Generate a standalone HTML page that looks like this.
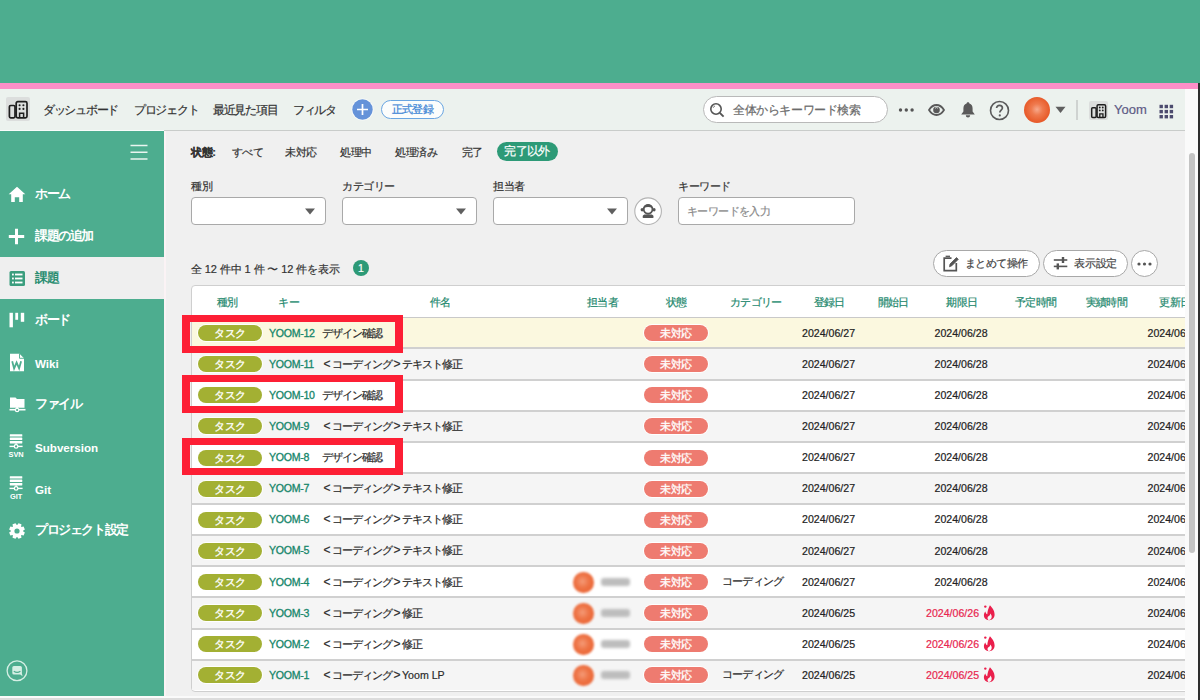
<!DOCTYPE html>
<html lang="ja">
<head>
<meta charset="utf-8">
<style>
*{box-sizing:border-box;margin:0;padding:0}
html,body{width:1200px;height:700px;overflow:hidden}
body{position:relative;background:#f0f0f0;font-family:"Liberation Sans",sans-serif;color:#333;font-size:11px;-webkit-text-stroke:0.2px currentColor}
.abs{position:absolute}
#band{left:0;top:0;width:1200px;height:83px;background:#4dad8f}
#pink{left:0;top:83px;width:1198px;height:6px;background:#fd8fc8}
#dark{left:1198px;top:83px;width:2px;height:617px;background:#2e2e2e}
#track{left:1185px;top:89px;width:13px;height:611px;background:#fafafa}
#thumb{left:1188.5px;top:153px;width:6.5px;height:400px;border-radius:4px;background:#c3c3c3}
#header{left:0;top:89px;width:1185px;height:42px;background:#ecf2ee;border-bottom:1px solid #c9ccca}
#side{left:0;top:131px;width:164px;height:565px;background:#4dad8f}
#sideline{left:164px;top:131px;width:1.5px;height:565px;background:#fbf3f5}
#bottom{left:0;top:696px;width:1185px;height:4px;background:#fafafa;border-top:0}
#bottomline{left:0;top:698px;width:1185px;height:2px;background:#dcdcdc}
.nav{top:102px;font-size:12px;color:#333;letter-spacing:-1.3px;white-space:nowrap}
.side-item{left:0;width:164px;height:42px}
.side-item .t{position:absolute;left:35px;top:13px;font-size:12.5px;font-weight:bold;color:#fff;letter-spacing:-1.4px;white-space:nowrap;-webkit-text-stroke:0}
.side-item.sel{background:#efefef}
.side-item.sel .t{color:#2b8e72}
.side-item svg{position:absolute;left:8px;top:13px}

.jp{white-space:nowrap}
.st{top:145px;font-size:11px;color:#333;letter-spacing:-0.4px;white-space:nowrap}
.lbl{top:179px;font-size:11px;color:#333;letter-spacing:-0.4px;white-space:nowrap}
.selbox{top:197px;height:28px;width:135px;background:#fff;border:1.5px solid #a9a9a9;border-radius:4px}
.selbox svg{position:absolute;right:10px;top:10px}
.btn{top:250px;height:27px;background:#fff;border:1px solid #a8a8a8;border-radius:14px}
#table{left:191px;top:285px;width:1100px;height:407px;background:#fff;border:1px solid #cfcfcf;border-radius:4px;overflow:hidden}
.hd{top:295.5px;font-size:10.6px;color:#24896e;letter-spacing:-0.7px;white-space:nowrap;-webkit-text-stroke:0.2px #24896e}
.row{left:192px;width:993px;height:31px;border-bottom:2px solid #d0d0d0}
.pill{position:absolute;left:198px;width:64px;height:16px;border-radius:8px;background:#a3b033;color:#fff;font-size:11px;text-align:center;line-height:16px;letter-spacing:-0.2px;box-shadow:0 0 0 1px #fff;-webkit-text-stroke:0.3px #fff}
.stp{position:absolute;left:643.5px;width:64.5px;height:16px;border-radius:8px;background:#ee7b70;color:#fff;font-size:11px;text-align:center;line-height:16px;letter-spacing:-0.6px;box-shadow:0 0 0 1px #fff;-webkit-text-stroke:0.3px #fff}
.key{position:absolute;left:269px;font-size:10.6px;color:#15866a;letter-spacing:-0.3px;white-space:nowrap;-webkit-text-stroke:0.3px #15866a}
.ttl{position:absolute;left:322px;font-size:11px;color:#2a2a2a;letter-spacing:-1px;white-space:nowrap}
.br{display:inline-block;width:10px;text-align:center;letter-spacing:0;font-size:12px}
.dt{position:absolute;font-size:10.6px;color:#222;white-space:nowrap}
.red{color:#e8264f}
.cat{position:absolute;left:722px;font-size:10.5px;color:#2a2a2a;letter-spacing:-0.8px;white-space:nowrap}
.rbox{position:absolute;left:182px;width:221px;border:7.6px solid #fd1f35;border-left-width:8.2px;border-right-width:8.2px}
</style>
</head>
<body>
<div id="band" class="abs"></div>
<div id="pink" class="abs"></div>
<div id="header" class="abs"></div>
<div id="side" class="abs"></div>
<div class="abs" style="left:0;top:129.5px;width:164px;height:1.5px;background:#fafcfb"></div>
<div id="sideline" class="abs"></div>
<div id="bottom" class="abs"></div>
<div id="bottomline" class="abs"></div>


<!-- header content -->
<div class="abs" style="left:6px;top:97px;width:24px;height:24px;background:#dcdedd;border-radius:2px"></div>
<svg class="abs" style="left:6px;top:97px" width="24" height="24" viewBox="0 0 24 24" fill="none" stroke="#1e1e1e" stroke-width="1.7">
<rect x="10.2" y="4.6" width="10.8" height="16.2" rx="1.6"/>
<rect x="3.4" y="8.5" width="5.6" height="12.3" rx="1.3"/>
<path d="M13.6 20.8V16.3H17.6V20.8" stroke-width="1.5"/>
<g fill="#1e1e1e" stroke="none"><circle cx="13.6" cy="8.2" r="1.05"/><circle cx="17.4" cy="8.2" r="1.05"/><circle cx="13.6" cy="11.9" r="1.05"/><circle cx="17.4" cy="11.9" r="1.05"/></g>
</svg>
<div class="abs nav" style="left:43px">ダッシュボード</div>
<div class="abs nav" style="left:134px">プロジェクト</div>
<div class="abs nav" style="left:213px">最近見た項目</div>
<div class="abs nav" style="left:293px">フィルタ</div>
<svg class="abs" style="left:351px;top:98px" width="23" height="23" viewBox="0 0 23 23"><circle cx="11.5" cy="11.5" r="11" fill="#fafcf9"/><circle cx="11.5" cy="11.5" r="10.2" fill="#6593d9"/><path d="M11.5 6V17M6 11.5H17" stroke="#fff" stroke-width="1.7"/></svg>
<div class="abs" style="left:381px;top:100px;width:63px;height:19px;border-radius:10px;border:1.5px solid #6aa6e2;background:#fbfdfc;color:#3f87d6;font-size:11px;text-align:center;line-height:16px;letter-spacing:-0.8px;-webkit-text-stroke:0.25px #3f87d6">正式登録</div>

<div class="abs" style="left:703px;top:96px;width:185px;height:27px;border-radius:14px;border:1px solid #b9b9b9;background:#fff"></div>
<svg class="abs" style="left:709px;top:102px" width="16" height="16" viewBox="0 0 16 16" fill="none" stroke="#555" stroke-width="1.6"><circle cx="7" cy="7" r="5.2"/><path d="M10.8 10.8L14.6 14.6" stroke-width="1.9"/><path d="M4.3 5.6A3 3 0 0 1 5.8 4" stroke-width="1"/></svg>
<div class="abs" style="left:733px;top:102px;font-size:12px;color:#6b6b6b;letter-spacing:-0.4px;white-space:nowrap">全体からキーワード検索</div>

<svg class="abs" style="left:898px;top:107px" width="17" height="6" viewBox="0 0 17 6" fill="#555"><circle cx="2.5" cy="3" r="1.7"/><circle cx="8.3" cy="3" r="1.7"/><circle cx="14.1" cy="3" r="1.7"/></svg>
<svg class="abs" style="left:928px;top:104px" width="17" height="12" viewBox="0 0 17 12"><path d="M1 6C3.2 2.4 5.8 1 8.5 1S13.8 2.4 16 6C13.8 9.6 11.2 11 8.5 11S3.2 9.6 1 6Z" fill="none" stroke="#595959" stroke-width="1.8"/><circle cx="8.5" cy="6" r="3.3" fill="#595959"/><path d="M7 4.3A2 2 0 0 1 10 4.3" stroke="#ecf2ee" stroke-width="0.8" fill="none"/></svg>
<svg class="abs" style="left:959px;top:101px" width="18" height="17" viewBox="0 0 18 17" fill="#5a5a5a"><path d="M9 1.3C9.8 1.3 10.3 1.8 10.4 2.5C12.6 3.1 13.6 5 13.6 7.5V10.5L15.8 13.4H2.2L4.4 10.5V7.5C4.4 5 5.4 3.1 7.6 2.5C7.7 1.8 8.2 1.3 9 1.3Z"/><path d="M6.8 14.3H11.2A2.2 2.2 0 0 1 6.8 14.3Z"/></svg>
<svg class="abs" style="left:989px;top:100px" width="21" height="21" viewBox="0 0 21 21"><circle cx="10.5" cy="10.5" r="9" fill="none" stroke="#5a5a5a" stroke-width="1.6"/><path d="M7.6 8.1C7.6 6.3 8.9 5.3 10.5 5.3S13.4 6.3 13.4 8C13.4 10 10.8 10.2 10.8 12.4" fill="none" stroke="#5a5a5a" stroke-width="1.7"/><circle cx="10.8" cy="15.4" r="1.1" fill="#5a5a5a"/></svg>
<div class="abs" style="left:1024px;top:97px;width:26px;height:26px;border-radius:50%;background:radial-gradient(circle at 50% 48%,#f7a98c 0,#ef7a4e 30%,#e85d2c 65%,#e4552a 100%)"></div>
<svg class="abs" style="left:1055px;top:106px" width="11" height="8" viewBox="0 0 11 8"><path d="M0.5 0.8H10.5L5.5 7Z" fill="#5f5f5f"/></svg>
<div class="abs" style="left:1076px;top:100px;width:1.5px;height:20px;background:#cfd3d1"></div>
<div class="abs" style="left:1089px;top:101px;width:19px;height:19px;background:#dcdedd;border-radius:2px"></div>
<svg class="abs" style="left:1089px;top:101px" width="19" height="19" viewBox="0 0 24 24" fill="none" stroke="#1e1e1e" stroke-width="1.9">
<rect x="10.2" y="4.6" width="10.8" height="16.2" rx="1.6"/>
<rect x="3.4" y="8.5" width="5.6" height="12.3" rx="1.3"/>
<path d="M13.6 20.8V16.3H17.6V20.8" stroke-width="1.7"/>
<g fill="#1e1e1e" stroke="none"><circle cx="13.6" cy="8.2" r="1.15"/><circle cx="17.4" cy="8.2" r="1.15"/><circle cx="13.6" cy="11.9" r="1.15"/><circle cx="17.4" cy="11.9" r="1.15"/></g>
</svg>
<div class="abs" style="left:1114px;top:102px;font-size:13px;color:#5d5b85;white-space:nowrap">Yoom</div>
<svg class="abs" style="left:1159px;top:104px" width="15" height="15" viewBox="0 0 15 15" fill="#4c4b6e"><rect x="0.5" y="0.8" width="3.4" height="3.4"/><rect x="5.6" y="0.8" width="3.4" height="3.4"/><rect x="10.7" y="0.8" width="3.4" height="3.4"/><rect x="0.5" y="5.9" width="3.4" height="3.4"/><rect x="5.6" y="5.9" width="3.4" height="3.4"/><rect x="10.7" y="5.9" width="3.4" height="3.4"/><rect x="0.5" y="11" width="3.4" height="3.4"/><rect x="5.6" y="11" width="3.4" height="3.4"/><rect x="10.7" y="11" width="3.4" height="3.4"/></svg>

<!-- sidebar -->
<svg class="abs" style="left:130px;top:144px" width="18" height="17" viewBox="0 0 18 17" stroke="#e9f5f0" stroke-width="1.5"><path d="M0.5 1.5H17.5M0.5 8.3H17.5M0.5 15H17.5"/></svg>
<div class="abs side-item" style="top:173px"><div class="t">ホーム</div></div>
<svg class="abs" style="left:8px;top:186px" width="18" height="17" viewBox="0 0 18 17" fill="#fff"><path d="M9 0.8L17.3 8.3H14.8V16H11.2V11.2H6.8V16H3.2V8.3H0.7Z"/></svg>
<div class="abs side-item" style="top:215px"><div class="t">課題の追加</div></div>
<svg class="abs" style="left:8px;top:228px" width="17" height="17" viewBox="0 0 17 17" fill="#fff"><path d="M7 0.8H10V7H16.2V10H10V16.2H7V10H0.8V7H7Z"/></svg>
<div class="abs side-item sel" style="top:257px"><div class="t">課題</div></div>
<svg class="abs" style="left:9px;top:270px" width="17" height="17" viewBox="0 0 17 17"><rect x="0.5" y="1" width="15.5" height="15" rx="1.5" fill="#3b9e7e"/><g fill="#fff"><rect x="3" y="3.6" width="1.8" height="1.8"/><rect x="6" y="3.6" width="7.5" height="1.8"/><rect x="3" y="7.6" width="1.8" height="1.8"/><rect x="6" y="7.6" width="7.5" height="1.8"/><rect x="3" y="11.6" width="1.8" height="1.8"/><rect x="6" y="11.6" width="7.5" height="1.8"/></g></svg>
<div class="abs side-item" style="top:299px"><div class="t">ボード</div></div>
<svg class="abs" style="left:8px;top:312px" width="18" height="17" viewBox="0 0 18 17" fill="#fff"><rect x="1.5" y="0.8" width="3.4" height="14.5"/><rect x="7.3" y="0.8" width="2.8" height="7"/><rect x="12.8" y="0.8" width="3.4" height="9"/></svg>
<div class="abs side-item" style="top:341px"><div class="t" style="font-size:11.6px;letter-spacing:0;top:15.6px">Wiki</div></div>
<svg class="abs" style="left:9px;top:353px" width="16" height="19" viewBox="0 0 16 19"><path d="M1 0.8H10.5L15 5.3V18.2H1Z" fill="#fff"/><path d="M10.5 0.8V5.3H15" fill="none" stroke="#4dad8f" stroke-width="0.9"/><path d="M3.2 8.2L5.1 15.4L7.6 9.6L10.1 15.4L12.1 8.2" fill="none" stroke="#4dad8f" stroke-width="1.8"/></svg>
<div class="abs side-item" style="top:383px"><div class="t">ファイル</div></div>
<svg class="abs" style="left:9px;top:396px" width="17" height="18" viewBox="0 0 17 18" fill="#fff"><path d="M1 1.5H6.5L8 3H15.5V11.8H1Z"/><rect x="7.3" y="11" width="1.6" height="2.5"/><path d="M0.5 13.7H16.5" stroke="#fff" stroke-width="1.6"/><circle cx="8.1" cy="14" r="2.3" fill="#fff"/><circle cx="8.1" cy="14" r="1.1" fill="#4dad8f"/></svg>
<div class="abs side-item" style="top:425px"><div class="t" style="font-size:11.6px;letter-spacing:0;top:15.6px">Subversion</div></div>
<svg class="abs" style="left:8px;top:433px" width="17" height="25" viewBox="0 0 17 25"><g fill="#fff"><rect x="1.8" y="1.2" width="12.5" height="2.4" rx="0.4"/><rect x="1.8" y="4.6" width="12.5" height="2.4" rx="0.4"/><rect x="1.8" y="8" width="12.5" height="2.4" rx="0.4"/><rect x="7.3" y="10.4" width="1.6" height="2"/></g><path d="M1.5 13.4H14.6" stroke="#fff" stroke-width="1.4"/><circle cx="8.1" cy="13.4" r="1.8" fill="#4dad8f" stroke="#fff" stroke-width="1.3"/><text x="8.1" y="23.6" text-anchor="middle" font-family="Liberation Sans" font-weight="bold" font-size="7.4" fill="#fff">SVN</text></svg>
<div class="abs side-item" style="top:467px"><div class="t" style="font-size:11.6px;letter-spacing:0;top:15.6px">Git</div></div>
<svg class="abs" style="left:8px;top:475px" width="17" height="25" viewBox="0 0 17 25"><g fill="#fff"><rect x="1.8" y="1.2" width="12.5" height="2.4" rx="0.4"/><rect x="1.8" y="4.6" width="12.5" height="2.4" rx="0.4"/><rect x="1.8" y="8" width="12.5" height="2.4" rx="0.4"/><rect x="7.3" y="10.4" width="1.6" height="2"/></g><path d="M1.5 13.4H14.6" stroke="#fff" stroke-width="1.4"/><circle cx="8.1" cy="13.4" r="1.8" fill="#4dad8f" stroke="#fff" stroke-width="1.3"/><text x="8.1" y="23.6" text-anchor="middle" font-family="Liberation Sans" font-weight="bold" font-size="7.4" fill="#fff">GIT</text></svg>
<div class="abs side-item" style="top:509px"><div class="t">プロジェクト設定</div></div>
<svg class="abs" style="left:8px;top:521.6px" width="18" height="18" viewBox="0 0 18 18"><path fill="#fff" fill-rule="evenodd" d="M9.20 3.00L10.53 1.15L13.47 2.36L13.10 4.62L13.38 4.90L15.64 4.53L16.85 7.47L15.00 8.80L15.00 9.20L16.85 10.53L15.64 13.47L13.38 13.10L13.10 13.38L13.47 15.64L10.53 16.85L9.20 15.00L8.80 15.00L7.47 16.85L4.53 15.64L4.90 13.38L4.62 13.10L2.36 13.47L1.15 10.53L3.00 9.20L3.00 8.80L1.15 7.47L2.36 4.53L4.62 4.90L4.90 4.62L4.53 2.36L7.47 1.15L8.80 3.00Z M9 6.4A2.6 2.6 0 1 0 9 11.6A2.6 2.6 0 1 0 9 6.4Z"/></svg>
<svg class="abs" style="left:6px;top:659px" width="23" height="23" viewBox="0 0 23 23"><circle cx="11" cy="11.8" r="9.9" fill="none" stroke="#d6efe5" stroke-width="1.3"/><path d="M6.3 8.6Q6.3 7 7.9 7H14.3Q15.9 7 15.9 8.6V14.6L16.6 17.2L14.2 15.6H7.9Q6.3 15.6 6.3 14Z" fill="#d6efe5"/><path d="M7.8 12.2Q11.1 14.6 14.4 12.2" fill="none" stroke="#4dad8f" stroke-width="1.1"/></svg>

<!-- content -->
<div class="abs st" style="left:191px;font-weight:bold;-webkit-text-stroke:0.2px #333">状態:</div>
<div class="abs st" style="left:231.5px">すべて</div>
<div class="abs st" style="left:285px">未対応</div>
<div class="abs st" style="left:340px">処理中</div>
<div class="abs st" style="left:395px">処理済み</div>
<div class="abs st" style="left:461.5px">完了</div>
<div class="abs" style="left:496.5px;top:142px;width:61px;height:19px;border-radius:10px;background:#2d9a77;color:#fff;font-size:11.5px;line-height:19px;text-align:center;letter-spacing:-0.6px;-webkit-text-stroke:0.2px #fff">完了以外</div>

<div class="abs lbl" style="left:191px">種別</div>
<div class="abs lbl" style="left:342px">カテゴリー</div>
<div class="abs lbl" style="left:493px">担当者</div>
<div class="abs lbl" style="left:678px">キーワード</div>
<div class="abs selbox" style="left:191px"><svg width="10" height="7" viewBox="0 0 10 7"><path d="M0 0.5H10L5 6.5Z" fill="#5f5f5f"/></svg></div>
<div class="abs selbox" style="left:342px"><svg width="10" height="7" viewBox="0 0 10 7"><path d="M0 0.5H10L5 6.5Z" fill="#5f5f5f"/></svg></div>
<div class="abs selbox" style="left:493px"><svg width="10" height="7" viewBox="0 0 10 7"><path d="M0 0.5H10L5 6.5Z" fill="#5f5f5f"/></svg></div>
<svg class="abs" style="left:634px;top:197px" width="28" height="28" viewBox="0 0 28 28"><circle cx="14.1" cy="14.2" r="13.3" fill="#fff" stroke="#b3b3b3" stroke-width="1.1"/><g fill="#555"><ellipse cx="8.1" cy="12.7" rx="1.5" ry="1.7"/><ellipse cx="20.1" cy="12.7" rx="1.5" ry="1.7"/><path d="M8.6 20.2Q8.4 18.2 10.3 17.6H17.9Q19.8 18.2 19.6 20.2Q19.5 21 18.6 21H9.6Q8.7 21 8.6 20.2Z"/></g><circle cx="14.1" cy="12.3" r="4.4" fill="#fff" stroke="#555" stroke-width="1.9"/><path d="M9.8 11.3Q10.6 7.2 14.1 7.2Q17.6 7.2 18.4 11.3Q14.1 8.7 9.8 11.3Z" fill="#555"/></svg>
<div class="abs" style="left:678px;top:197px;width:177px;height:28px;background:#fff;border:1.5px solid #a9a9a9;border-radius:4px"></div>
<div class="abs" style="left:687px;top:204px;font-size:11px;color:#8a8a8a;letter-spacing:-0.6px;white-space:nowrap">キーワードを入力</div>

<div class="abs" style="left:191px;top:262px;font-size:11px;color:#333;letter-spacing:-0.1px;white-space:nowrap">全 12 件中 1 件 〜 12 件を表示</div>
<div class="abs" style="left:353px;top:260px;width:16px;height:16px;border-radius:50%;background:#2d9a77;color:#fff;font-size:10.5px;line-height:16px;text-align:center">1</div>

<div class="abs btn" style="left:933px;width:107px"></div>
<svg class="abs" style="left:942px;top:255px" width="17" height="17" viewBox="0 0 17 17" fill="none" stroke="#555" stroke-width="1.7"><path d="M9.5 3.2H2.2V15.6H14.3V8"/><path d="M7.5 11.8L8 9L14.5 2.5L16.3 4.3L9.8 10.8Z" fill="#555" stroke-width="0.8"/><path d="M3.6 1.3H8" stroke-width="1.3"/></svg>
<div class="abs" style="left:965px;top:256px;font-size:11px;color:#444;letter-spacing:-0.6px;white-space:nowrap">まとめて操作</div>
<div class="abs btn" style="left:1043px;width:84.5px"></div>
<svg class="abs" style="left:1053px;top:256px" width="15" height="15" viewBox="0 0 15 15" fill="#555"><rect x="0.8" y="3.2" width="13.5" height="1.6"/><rect x="0.8" y="9.6" width="13.5" height="1.6"/><rect x="8.8" y="1" width="2.4" height="6"/><rect x="3.6" y="7.4" width="2.4" height="6"/></svg>
<div class="abs" style="left:1074px;top:256px;font-size:11px;color:#444;letter-spacing:-0.2px;white-space:nowrap">表示設定</div>
<div class="abs btn" style="left:1131px;width:27px"></div>
<svg class="abs" style="left:1136px;top:261px" width="17" height="6" viewBox="0 0 17 6" fill="#555"><circle cx="3" cy="3" r="1.6"/><circle cx="8.5" cy="3" r="1.6"/><circle cx="14" cy="3" r="1.6"/></svg>

<div id="table" class="abs"></div>

<!-- table -->
<div class="abs hd" style="left:217px">種別</div>
<div class="abs hd" style="left:278.3px">キー</div>
<div class="abs hd" style="left:430px">件名</div>
<div class="abs hd" style="left:587px">担当者</div>
<div class="abs hd" style="left:665.8px">状態</div>
<div class="abs hd" style="left:730px">カテゴリー</div>
<div class="abs hd" style="left:813.8px">登録日</div>
<div class="abs hd" style="left:877.6px">開始日</div>
<div class="abs hd" style="left:946.4px">期限日</div>
<div class="abs hd" style="left:1015px">予定時間</div>
<div class="abs hd" style="left:1085.8px">実績時間</div>
<div class="abs hd" style="left:1159.4px">更新日</div>
<div class="abs" style="left:192px;top:316.5px;width:993px;height:2px;background:#c9c9c9"></div>
<div class="abs row" style="top:318.30px;height:31.13px;background:#fbf8df"></div>
<div class="pill" style="top:325.00px">タスク</div>
<div class="key" style="top:326.50px">YOOM-12</div>
<div class="ttl" style="top:325.50px">デザイン確認</div>
<div class="stp" style="top:325.00px">未対応</div>
<div class="dt" style="left:802px;top:326.70px">2024/06/27</div>
<div class="dt" style="left:934.5px;top:326.70px">2024/06/28</div>
<div class="dt" style="left:1147.5px;top:326.70px">2024/06/27</div>
<div class="abs row" style="top:349.43px;height:31.13px;background:#f5f5f5"></div>
<div class="pill" style="top:356.13px">タスク</div>
<div class="key" style="top:357.63px">YOOM-11</div>
<div class="ttl" style="top:356.63px"><span class="br">&lt;</span>コーディング<span class="br">&gt;</span>テキスト修正</div>
<div class="stp" style="top:356.13px">未対応</div>
<div class="dt" style="left:802px;top:357.83px">2024/06/27</div>
<div class="dt" style="left:934.5px;top:357.83px">2024/06/28</div>
<div class="dt" style="left:1147.5px;top:357.83px">2024/06/27</div>
<div class="abs row" style="top:380.56px;height:31.13px;background:#fff"></div>
<div class="pill" style="top:387.26px">タスク</div>
<div class="key" style="top:388.76px">YOOM-10</div>
<div class="ttl" style="top:387.76px">デザイン確認</div>
<div class="stp" style="top:387.26px">未対応</div>
<div class="dt" style="left:802px;top:388.96px">2024/06/27</div>
<div class="dt" style="left:934.5px;top:388.96px">2024/06/28</div>
<div class="dt" style="left:1147.5px;top:388.96px">2024/06/27</div>
<div class="abs row" style="top:411.69px;height:31.13px;background:#f5f5f5"></div>
<div class="pill" style="top:418.39px">タスク</div>
<div class="key" style="top:419.89px">YOOM-9</div>
<div class="ttl" style="top:418.89px"><span class="br">&lt;</span>コーディング<span class="br">&gt;</span>テキスト修正</div>
<div class="stp" style="top:418.39px">未対応</div>
<div class="dt" style="left:802px;top:420.09px">2024/06/27</div>
<div class="dt" style="left:934.5px;top:420.09px">2024/06/28</div>
<div class="dt" style="left:1147.5px;top:420.09px">2024/06/27</div>
<div class="abs row" style="top:442.82px;height:31.13px;background:#fff"></div>
<div class="pill" style="top:449.52px">タスク</div>
<div class="key" style="top:451.02px">YOOM-8</div>
<div class="ttl" style="top:450.02px">デザイン確認</div>
<div class="stp" style="top:449.52px">未対応</div>
<div class="dt" style="left:802px;top:451.22px">2024/06/27</div>
<div class="dt" style="left:934.5px;top:451.22px">2024/06/28</div>
<div class="dt" style="left:1147.5px;top:451.22px">2024/06/27</div>
<div class="abs row" style="top:473.95px;height:31.13px;background:#f5f5f5"></div>
<div class="pill" style="top:480.65px">タスク</div>
<div class="key" style="top:482.15px">YOOM-7</div>
<div class="ttl" style="top:481.15px"><span class="br">&lt;</span>コーディング<span class="br">&gt;</span>テキスト修正</div>
<div class="stp" style="top:480.65px">未対応</div>
<div class="dt" style="left:802px;top:482.35px">2024/06/27</div>
<div class="dt" style="left:934.5px;top:482.35px">2024/06/28</div>
<div class="dt" style="left:1147.5px;top:482.35px">2024/06/27</div>
<div class="abs row" style="top:505.08px;height:31.13px;background:#fff"></div>
<div class="pill" style="top:511.78px">タスク</div>
<div class="key" style="top:513.28px">YOOM-6</div>
<div class="ttl" style="top:512.28px"><span class="br">&lt;</span>コーディング<span class="br">&gt;</span>テキスト修正</div>
<div class="stp" style="top:511.78px">未対応</div>
<div class="dt" style="left:802px;top:513.48px">2024/06/27</div>
<div class="dt" style="left:934.5px;top:513.48px">2024/06/28</div>
<div class="dt" style="left:1147.5px;top:513.48px">2024/06/27</div>
<div class="abs row" style="top:536.21px;height:31.13px;background:#f5f5f5"></div>
<div class="pill" style="top:542.91px">タスク</div>
<div class="key" style="top:544.41px">YOOM-5</div>
<div class="ttl" style="top:543.41px"><span class="br">&lt;</span>コーディング<span class="br">&gt;</span>テキスト修正</div>
<div class="stp" style="top:542.91px">未対応</div>
<div class="dt" style="left:802px;top:544.61px">2024/06/27</div>
<div class="dt" style="left:934.5px;top:544.61px">2024/06/28</div>
<div class="dt" style="left:1147.5px;top:544.61px">2024/06/27</div>
<div class="abs row" style="top:567.34px;height:31.13px;background:#fff"></div>
<div class="pill" style="top:574.04px">タスク</div>
<div class="key" style="top:575.54px">YOOM-4</div>
<div class="ttl" style="top:574.54px"><span class="br">&lt;</span>コーディング<span class="br">&gt;</span>テキスト修正</div>
<div class="abs" style="left:573px;top:572.04px;width:20.5px;height:20.5px;border-radius:50%;background:radial-gradient(circle at 45% 45%,#f59a77 0,#ee7446 40%,#e85a28 100%);filter:blur(1px)"></div>
<div class="abs" style="left:601px;top:578.04px;width:29px;height:8px;border-radius:3px;background:#bdbdbd;filter:blur(1.8px)"></div>
<div class="stp" style="top:574.04px">未対応</div>
<div class="cat" style="top:575.04px">コーディング</div>
<div class="dt" style="left:802px;top:575.74px">2024/06/27</div>
<div class="dt" style="left:934.5px;top:575.74px">2024/06/28</div>
<div class="dt" style="left:1147.5px;top:575.74px">2024/06/27</div>
<div class="abs row" style="top:598.47px;height:31.13px;background:#f5f5f5"></div>
<div class="pill" style="top:605.17px">タスク</div>
<div class="key" style="top:606.67px">YOOM-3</div>
<div class="ttl" style="top:605.67px"><span class="br">&lt;</span>コーディング<span class="br">&gt;</span>修正</div>
<div class="abs" style="left:573px;top:603.17px;width:20.5px;height:20.5px;border-radius:50%;background:radial-gradient(circle at 45% 45%,#f59a77 0,#ee7446 40%,#e85a28 100%);filter:blur(1px)"></div>
<div class="abs" style="left:601px;top:609.17px;width:29px;height:8px;border-radius:3px;background:#bdbdbd;filter:blur(1.8px)"></div>
<div class="stp" style="top:605.17px">未対応</div>
<div class="dt" style="left:802px;top:606.87px">2024/06/25</div>
<div class="dt red" style="left:926px;top:606.87px">2024/06/26</div>
<svg class="abs" style="left:983px;top:604.87px" width="13" height="16" viewBox="0 0 13 16"><path fill-rule="evenodd" fill="#ea1f4c" d="M6.9 0.3C8.8 2.2 11.6 5.3 11.6 9.6C11.6 13 9.4 15.2 6.2 15.2C2.9 15.2 0.9 13 0.9 10.3C0.9 8.6 1.5 7.4 2.4 6.4C2.6 7.8 3.3 8.8 4.3 9.3C4.4 6.1 5.4 3.2 6.9 0.3Z M6.2 15.1C7.9 14.5 8.7 13.3 8.7 11.8C8.7 10.4 8 9.4 7.4 8.5C7.1 10 6.3 11 5.1 11.6C4.3 12.5 4.3 13.9 5.4 15Z"/><circle cx="2.3" cy="1.6" r="1.2" fill="#ea1f4c"/></svg>
<div class="dt" style="left:1147.5px;top:606.87px">2024/06/25</div>
<div class="abs row" style="top:629.60px;height:31.13px;background:#fff"></div>
<div class="pill" style="top:636.30px">タスク</div>
<div class="key" style="top:637.80px">YOOM-2</div>
<div class="ttl" style="top:636.80px"><span class="br">&lt;</span>コーディング<span class="br">&gt;</span>修正</div>
<div class="abs" style="left:573px;top:634.30px;width:20.5px;height:20.5px;border-radius:50%;background:radial-gradient(circle at 45% 45%,#f59a77 0,#ee7446 40%,#e85a28 100%);filter:blur(1px)"></div>
<div class="abs" style="left:601px;top:640.30px;width:29px;height:8px;border-radius:3px;background:#bdbdbd;filter:blur(1.8px)"></div>
<div class="stp" style="top:636.30px">未対応</div>
<div class="dt" style="left:802px;top:638.00px">2024/06/25</div>
<div class="dt red" style="left:926px;top:638.00px">2024/06/26</div>
<svg class="abs" style="left:983px;top:636.00px" width="13" height="16" viewBox="0 0 13 16"><path fill-rule="evenodd" fill="#ea1f4c" d="M6.9 0.3C8.8 2.2 11.6 5.3 11.6 9.6C11.6 13 9.4 15.2 6.2 15.2C2.9 15.2 0.9 13 0.9 10.3C0.9 8.6 1.5 7.4 2.4 6.4C2.6 7.8 3.3 8.8 4.3 9.3C4.4 6.1 5.4 3.2 6.9 0.3Z M6.2 15.1C7.9 14.5 8.7 13.3 8.7 11.8C8.7 10.4 8 9.4 7.4 8.5C7.1 10 6.3 11 5.1 11.6C4.3 12.5 4.3 13.9 5.4 15Z"/><circle cx="2.3" cy="1.6" r="1.2" fill="#ea1f4c"/></svg>
<div class="dt" style="left:1147.5px;top:638.00px">2024/06/25</div>
<div class="abs row" style="top:660.73px;height:29.67px;background:#f5f5f5;border-bottom:0"></div>
<div class="pill" style="top:667.43px">タスク</div>
<div class="key" style="top:668.93px">YOOM-1</div>
<div class="ttl" style="top:667.93px"><span class="br">&lt;</span>コーディング<span class="br">&gt;</span><span style="letter-spacing:0;font-size:10.6px">Yoom LP</span></div>
<div class="abs" style="left:573px;top:665.43px;width:20.5px;height:20.5px;border-radius:50%;background:radial-gradient(circle at 45% 45%,#f59a77 0,#ee7446 40%,#e85a28 100%);filter:blur(1px)"></div>
<div class="abs" style="left:601px;top:671.43px;width:29px;height:8px;border-radius:3px;background:#bdbdbd;filter:blur(1.8px)"></div>
<div class="stp" style="top:667.43px">未対応</div>
<div class="cat" style="top:668.43px">コーディング</div>
<div class="dt" style="left:802px;top:669.13px">2024/06/25</div>
<div class="dt red" style="left:926px;top:669.13px">2024/06/25</div>
<svg class="abs" style="left:983px;top:667.13px" width="13" height="16" viewBox="0 0 13 16"><path fill-rule="evenodd" fill="#ea1f4c" d="M6.9 0.3C8.8 2.2 11.6 5.3 11.6 9.6C11.6 13 9.4 15.2 6.2 15.2C2.9 15.2 0.9 13 0.9 10.3C0.9 8.6 1.5 7.4 2.4 6.4C2.6 7.8 3.3 8.8 4.3 9.3C4.4 6.1 5.4 3.2 6.9 0.3Z M6.2 15.1C7.9 14.5 8.7 13.3 8.7 11.8C8.7 10.4 8 9.4 7.4 8.5C7.1 10 6.3 11 5.1 11.6C4.3 12.5 4.3 13.9 5.4 15Z"/><circle cx="2.3" cy="1.6" r="1.2" fill="#ea1f4c"/></svg>
<div class="dt" style="left:1147.5px;top:669.13px">2024/06/25</div>
<div class="rbox" style="top:315.3px;height:37.3px"></div>
<div class="rbox" style="top:375.3px;height:37.3px"></div>
<div class="rbox" style="top:437.8px;height:37.7px"></div>
<div id="track" class="abs"></div>
<div id="thumb" class="abs"></div>
<div id="dark" class="abs"></div>
</body>
</html>
